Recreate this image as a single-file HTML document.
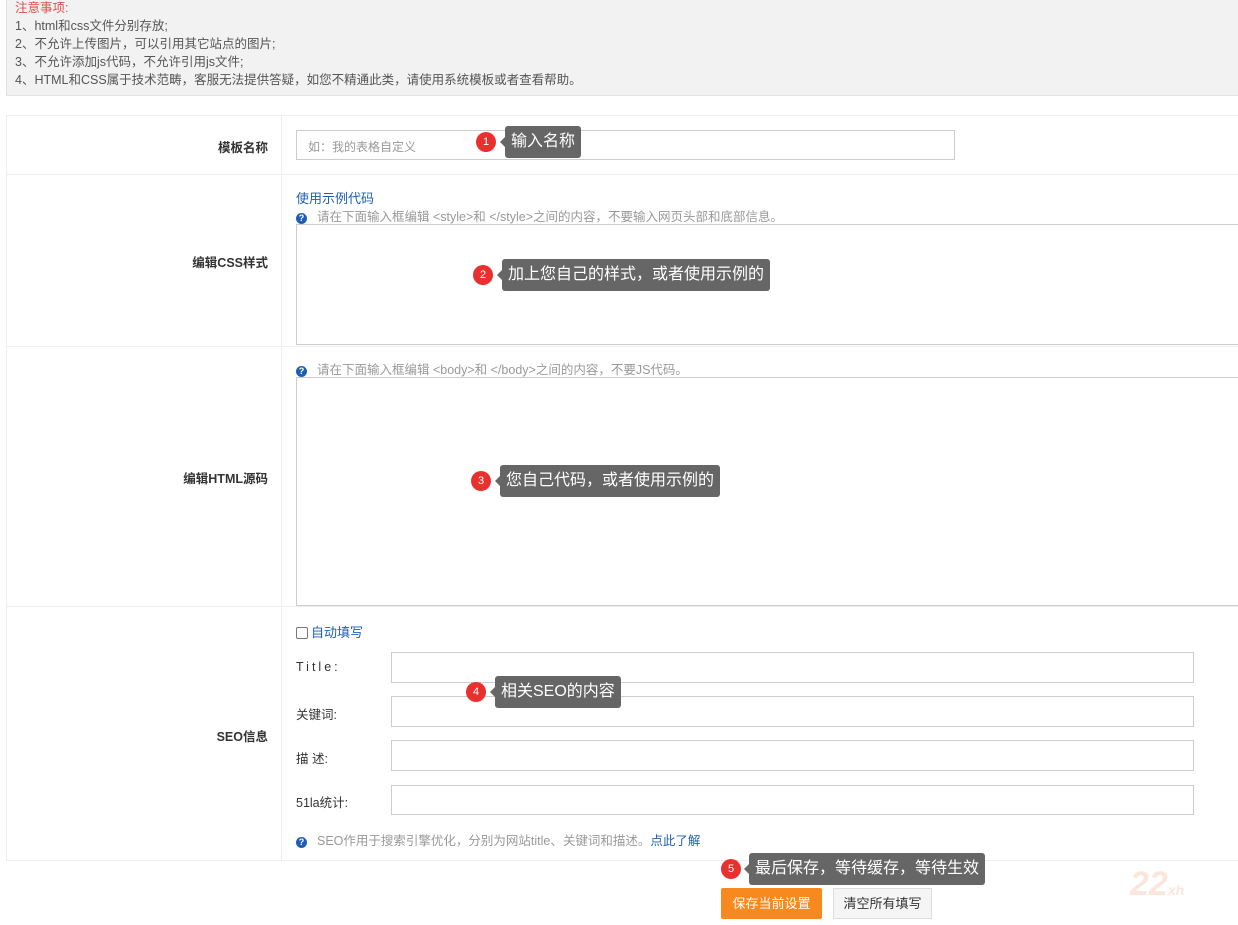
<!DOCTYPE html>
<html><head><meta charset="utf-8"><style>
body{margin:0;width:1238px;height:925px;background:#fff;font-family:"Liberation Sans","Noto Sans CJK SC",sans-serif;font-size:12px;color:#555;position:relative;overflow:hidden}
.a{position:absolute}
.notice{left:6px;top:-2px;width:1240px;height:98px;background:#f2f2f2;border:1px solid #e2e2e2;box-sizing:border-box;padding:0 0 0 8px;line-height:18px;font-size:12.5px;color:#555}
.row{left:6px;width:1240px;border:1px solid #eee;box-sizing:border-box}
.lab{width:262px;text-align:right;font-weight:bold;color:#333;font-size:12.5px}
.vl{left:281px;width:1px;background:#eee}
.inp{border:1px solid #ccc;box-sizing:border-box;background:#fff}
.tip{background:#666;color:#fff;font-size:16px;border-radius:3px;height:32px;line-height:32px;padding:0 6px}
.tip:before{content:"";position:absolute;left:-5px;top:11px;border:5px solid transparent;border-left:0;border-right-color:#666}
.num{width:20px;height:20px;border-radius:50%;background:#e8312f;color:#fff;font-size:11px;text-align:center;line-height:20px}
.q{display:inline-block;width:11px;height:11px;border-radius:50%;background:#1e5fb4;color:#fff;font-size:9px;line-height:11px;text-align:center;font-weight:bold;margin-right:10px;vertical-align:0px}
.hint{color:#999;font-size:12.5px}
.sl{left:296px;color:#333;font-size:12.5px}
</style></head><body>
<div class="a notice"><span style="color:#d9534f">注意事项:</span><br>1、html和css文件分别存放;<br>2、不允许上传图片，可以引用其它站点的图片;<br>3、不允许添加js代码，不允许引用js文件;<br>4、HTML和CSS属于技术范畴，客服无法提供答疑，如您不精通此类，请使用系统模板或者查看帮助。</div>

<div class="a row" style="top:115px;height:60px"></div>
<div class="a row" style="top:174px;height:173px"></div>
<div class="a row" style="top:346px;height:261px"></div>
<div class="a row" style="top:606px;height:255px"></div>
<div class="a vl" style="top:115px;height:745px"></div>

<div class="a lab" style="left:6px;top:137px">模板名称</div>
<div class="a lab" style="left:6px;top:252px">编辑CSS样式</div>
<div class="a lab" style="left:6px;top:468px">编辑HTML源码</div>
<div class="a lab" style="left:6px;top:726px">SEO信息</div>

<div class="a inp" style="left:296px;top:130px;width:659px;height:30px;color:#999;padding:7px 0 0 11px">如：我的表格自定义</div>

<div class="a" style="left:296px;top:188px;color:#1e5fb4;font-size:13px">使用示例代码</div>
<div class="a hint" style="left:296px;top:206px"><span class="q">?</span>请在下面输入框编辑 &lt;style&gt;和 &lt;/style&gt;之间的内容，不要输入网页头部和底部信息。</div>
<div class="a inp" style="left:296px;top:224px;width:960px;height:121px"></div>

<div class="a hint" style="left:296px;top:359px"><span class="q">?</span>请在下面输入框编辑 &lt;body&gt;和 &lt;/body&gt;之间的内容，不要JS代码。</div>
<div class="a inp" style="left:296px;top:377px;width:960px;height:229px"></div>

<div class="a" style="left:296px;top:622px;color:#1e5fb4;font-size:13px"><span style="display:inline-block;width:10px;height:10px;border:1px solid #777;border-radius:2px;vertical-align:-2px;margin-right:3px"></span>自动填写</div>
<div class="a sl" style="top:660px;letter-spacing:3px">Title:</div>
<div class="a sl" style="top:704px">关键词:</div>
<div class="a sl" style="top:748px">描 述:</div>
<div class="a sl" style="top:792px">51la统计:</div>
<div class="a inp" style="left:391px;top:652px;width:803px;height:31px"></div>
<div class="a inp" style="left:391px;top:696px;width:803px;height:31px"></div>
<div class="a inp" style="left:391px;top:740px;width:803px;height:31px"></div>
<div class="a inp" style="left:391px;top:785px;width:803px;height:30px"></div>
<div class="a hint" style="left:296px;top:830px"><span class="q">?</span>SEO作用于搜索引擎优化，分别为网站title、关键词和描述。<span style="color:#1e5fb4">点此了解</span></div>

<div class="a" style="left:721px;top:888px;width:101px;height:31px;background:#f7891e;border-radius:2px;color:#fff;font-size:13px;text-align:center;line-height:31px">保存当前设置</div>
<div class="a" style="left:833px;top:888px;width:99px;height:31px;background:#f5f5f5;border:1px solid #ddd;box-sizing:border-box;color:#333;font-size:13px;text-align:center;line-height:29px">清空所有填写</div>
<div class="a" style="left:1130px;top:865px;color:#fbe6dc;font-size:34px;font-weight:bold;font-style:italic">22<span style="font-size:14px">xh</span></div>

<div class="a num" style="left:476px;top:132px">1</div>
<div class="a tip" style="left:505px;top:126px">输入名称</div>
<div class="a num" style="left:473px;top:265px">2</div>
<div class="a tip" style="left:502px;top:259px">加上您自己的样式，或者使用示例的</div>
<div class="a num" style="left:471px;top:471px">3</div>
<div class="a tip" style="left:500px;top:465px">您自己代码，或者使用示例的</div>
<div class="a num" style="left:466px;top:682px">4</div>
<div class="a tip" style="left:495px;top:676px">相关SEO的内容</div>
<div class="a num" style="left:721px;top:859px">5</div>
<div class="a tip" style="left:749px;top:853px">最后保存，等待缓存，等待生效</div>
</body></html>
